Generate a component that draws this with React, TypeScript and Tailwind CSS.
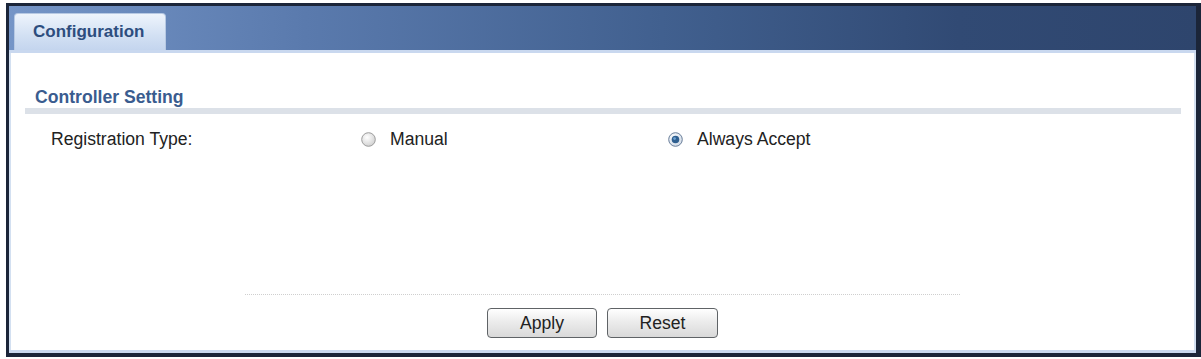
import React from 'react'

function Radio({ checked }: { checked: boolean }) {
  return (
    <svg width="15" height="15" viewBox="0 0 15 15" className="shrink-0">
      <defs>
        <radialGradient id={checked ? 'rg-on' : 'rg-off'} cx="40%" cy="35%" r="70%">
          <stop offset="0%" stopColor="#ffffff" />
          <stop offset="100%" stopColor={checked ? '#cfd9e6' : '#cfcfcf'} />
        </radialGradient>
      </defs>
      <circle cx="7.5" cy="7.5" r="6.8" fill={`url(#${checked ? 'rg-on' : 'rg-off'})`} stroke={checked ? '#6a7f9a' : '#9c9c9c'} strokeWidth="1" />
      {checked && <circle cx="7.5" cy="7.5" r="3.8" fill="#2f5f8f" />}
      {checked && <circle cx="6.6" cy="6.6" r="1.4" fill="#6ea3d4" />}
    </svg>
  )
}

function App() {
  return (
    <div className="w-[1201px] h-[359px] bg-white pt-[3px] pl-[6px] font-['Liberation_Sans',Arial,sans-serif]">
      <div className="h-[354px] flex flex-col border-t-[3px] border-l-[3px] border-r-[5px] border-b-[4px] border-[#1b2539]">
        {/* header band */}
        <div className="h-[44px] flex items-end pl-[5px] bg-[linear-gradient(to_right,#7595c7_0%,#5a7aad_25%,#41608f_55%,#314a74_80%,#2e456d_100%)]">
          <div className="w-[152px] h-[37px] rounded-t-[4px] pl-[18px] pt-[8px] bg-[linear-gradient(to_bottom,#eef4fc,#d2e0f3_60%,#c4d5ee)] border-t border-l border-r border-[#b7c9e3]">
            <span className="block text-[17px] leading-[20px] font-bold text-[#2d4d7e]">Configuration</span>
          </div>
        </div>
        <div className="h-[3px] bg-[#c9d8ef]" />

        {/* body */}
        <div className="flex-1 flex flex-col bg-white border-l-2 border-r-2 border-[#d3e0f1]">
          <div className="pt-[34px] pl-[24px] text-[17.6px] leading-[20px] font-bold text-[#3a5c8f]">Controller Setting</div>
          <div className="mt-[1px] ml-[14px] mr-[13px] h-[6px] bg-[#dce1e8]" />

          <div className="mt-[13px] h-[24px] flex items-center pl-[40px] text-[17.6px] text-[#222]">
            <div className="w-[310px]">Registration Type:</div>
            <div className="w-[307px] flex items-center gap-[14px]">
              <Radio checked={false} />
              <span>Manual</span>
            </div>
            <div className="flex items-center gap-[14px]">
              <Radio checked={true} />
              <span>Always Accept</span>
            </div>
          </div>

          <div className="flex-1" />
          <div className="mx-auto w-[715px] border-t border-dotted border-[#cfcfcf]" />
          <div className="mt-[13px] mb-[12px] flex justify-center gap-[10px]">
            <button className="w-[110px] h-[30px] rounded-[4px] border border-[#5f6366] bg-[linear-gradient(to_bottom,#ffffff,#ececec_45%,#d9d9d9)] text-[17.6px] text-[#222]">
              Apply
            </button>
            <button className="w-[111px] h-[30px] rounded-[4px] border border-[#5f6366] bg-[linear-gradient(to_bottom,#ffffff,#ececec_45%,#d9d9d9)] text-[17.6px] text-[#222]">
              Reset
            </button>
          </div>
        </div>
        <div className="h-[3px] bg-[#c9d8ef]" />
      </div>
    </div>
  )
}

export default App
